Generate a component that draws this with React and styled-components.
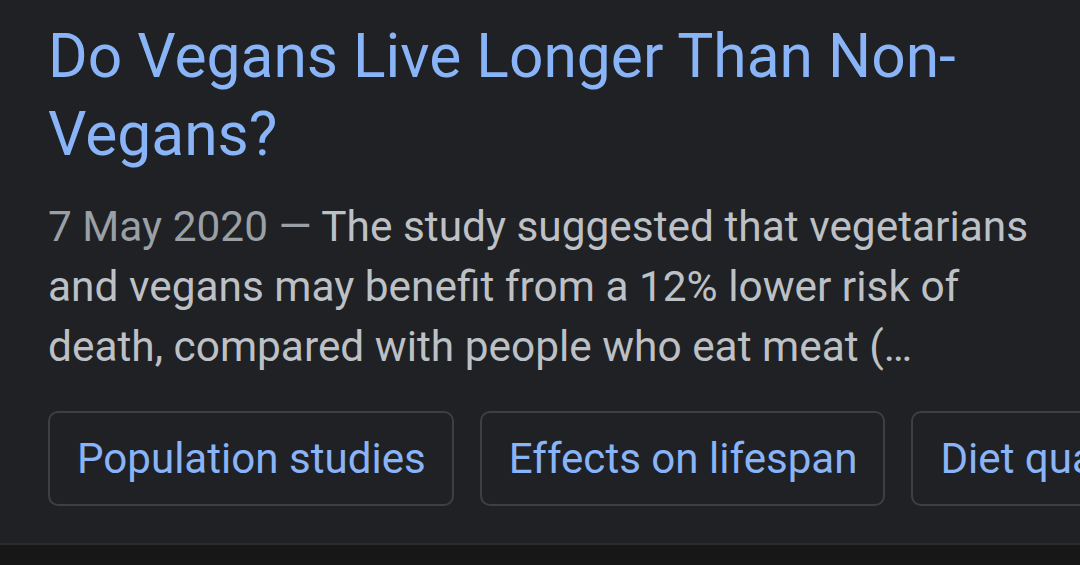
import styled, { createGlobalStyle } from "styled-components";

const GlobalStyle = createGlobalStyle`
  html, body {
    margin: 0;
    padding: 0;
    background-color: #171717;
  }
`;

const Page = styled.div`
  width: 1080px;
  height: 565px;
  overflow: hidden;
  background-color: #171717;
`;

const Card = styled.article`
  height: 545px;
  box-sizing: border-box;
  background-color: #202124;
  border-bottom: 2px solid #2a2b2e;
  padding: 18px 0 0 48px;
  overflow: hidden;
`;

const Title = styled.h3`
  margin: 0;
  padding-right: 60px;
  font-family: Roboto, "Liberation Sans", sans-serif;
  font-weight: 400;
  font-size: 60.5px;
  line-height: 78px;
  color: #8ab4f8;
`;

const Snippet = styled.p`
  margin: 23px 0 0;
  padding-right: 30px;
  font-family: Roboto, "Liberation Sans", sans-serif;
  font-size: 42.4px;
  line-height: 60px;
  color: #bdc1c6;
`;

const Date = styled.span`
  color: #9aa0a6;
`;

const ChipRow = styled.div`
  display: flex;
  gap: 26px;
  margin-top: 34px;
  white-space: nowrap;
`;

const Chip = styled.a`
  flex: none;
  box-sizing: border-box;
  height: 95px;
  display: flex;
  align-items: center;
  padding: 0 26px 0 27px;
  border: 2px solid #3c4043;
  border-radius: 10px;
  font-family: Roboto, "Liberation Sans", sans-serif;
  font-size: 42.1px;
  color: #8ab4f8;
  text-decoration: none;
`;

const chips = ["Population studies", "Effects on lifespan", "Diet quality"];

function App() {
  return (
    <Page>
      <GlobalStyle />
      <Card>
        <Title>Do Vegans Live Longer Than Non-Vegans?</Title>
        <Snippet>
          <Date>7 May 2020 — </Date>
          The study suggested that vegetarians and vegans may benefit from a
          12% lower risk of death, compared with people who eat meat (…
        </Snippet>
        <ChipRow>
          {chips.map((c) => (
            <Chip key={c}>{c}</Chip>
          ))}
        </ChipRow>
      </Card>
    </Page>
  );
}

export default App;
